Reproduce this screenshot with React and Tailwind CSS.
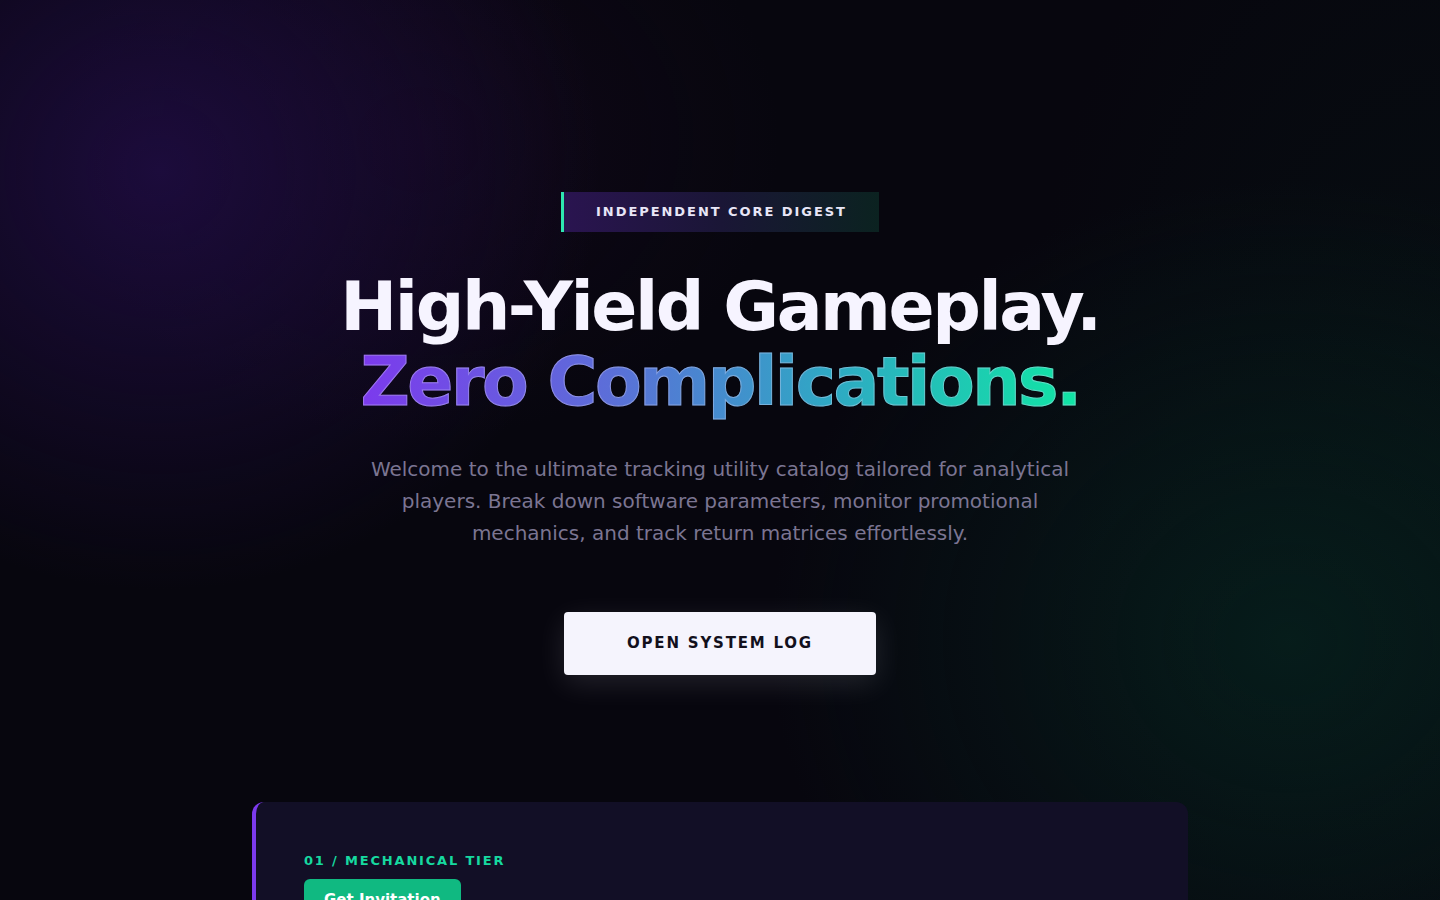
import React from 'react';

const font = { fontFamily: '"DejaVu Sans", "Noto Sans", sans-serif' };

const Badge = () => (
  <div className="inline-flex items-center border-l-[3px] border-[#2ee6b0] bg-[linear-gradient(90deg,#2a1450_0%,#1a1636_50%,#0b2220_100%)] px-8 py-3">
    <span className="text-[13px] font-bold leading-4 tracking-[0.15em] text-[#e8e6f7]">
      INDEPENDENT CORE DIGEST
    </span>
  </div>
);

const Hero = () => (
  <section className="flex flex-col items-center pt-[192px] text-center">
    <Badge />
    <h1 className="mt-[38px] text-[68px] font-bold leading-[1.1] tracking-[-0.036em] text-[#f6f4ff]">
      High-Yield Gameplay.
      <br />
      <span className="bg-[linear-gradient(90deg,#7c3aed_0%,#5b6fd8_35%,#2fa8c4_65%,#10e6a4_100%)] bg-clip-text text-transparent [-webkit-text-stroke:1px_rgba(230,225,255,0.35)]">
        Zero Complications.
      </span>
    </h1>
    <p className="mt-[33px] max-w-[710px] text-[20px] leading-8 text-[#7b7592]">
      Welcome to the ultimate tracking utility catalog tailored for analytical players. Break down software parameters, monitor promotional mechanics, and track return matrices effortlessly.
    </p>
    <button className="mt-[63px] h-[63px] w-[312px] rounded-[4px] bg-[#f5f4fd] text-[15px] font-bold tracking-[0.12em] text-[#12101c] shadow-[0_8px_30px_rgba(245,244,253,0.12)]">
      OPEN SYSTEM LOG
    </button>
  </section>
);

const TierCard = () => (
  <section className="mx-auto mt-[127px] w-[936px] rounded-xl border-l-4 border-[#7c3aed] bg-[#120f26] px-12 pb-16 pt-[51px]">
    <div className="text-[13px] font-bold leading-4 tracking-[0.14em] text-[#16d9a0]">
      01 / MECHANICAL TIER
    </div>
    <button className="mt-2.5 rounded-md bg-[#10b981] px-5 py-2.5 text-[15px] font-bold text-white">
      Get Invitation
    </button>
    <p className="mt-6 max-w-[640px] text-base leading-7 text-[#7b7592]">
      Structured breakdowns of reel mechanics, volatility bands and feature frequency, compiled for players who prefer numbers to noise.
    </p>
  </section>
);

export default function App() {
  return (
    <div
      style={font}
      className="min-h-screen bg-[#07060e] bg-[radial-gradient(ellipse_440px_420px_at_160px_170px,rgba(30,12,64,0.9),transparent_100%),radial-gradient(ellipse_360px_300px_at_420px_140px,rgba(34,10,46,0.3),transparent_100%),radial-gradient(ellipse_520px_460px_at_1290px_640px,rgba(6,34,30,0.75),transparent_100%),radial-gradient(ellipse_420px_700px_at_1440px_460px,rgba(6,24,22,0.45),transparent_100%)] pb-24"
    >
      <Hero />
      <TierCard />
    </div>
  );
}
